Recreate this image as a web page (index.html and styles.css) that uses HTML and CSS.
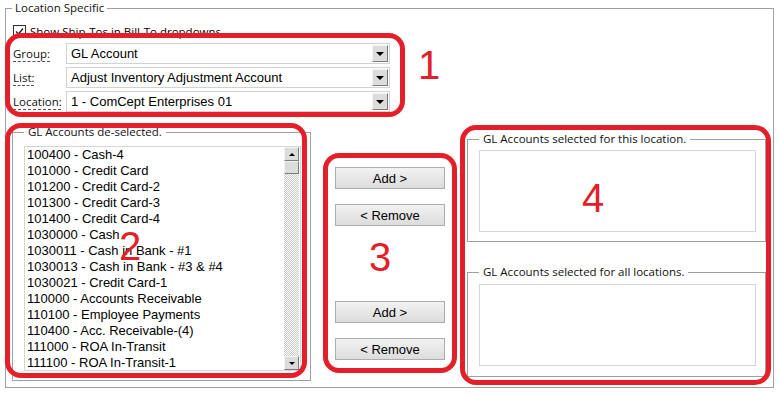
FILE: index.html
```html
<!DOCTYPE html>
<html lang="en">
<head>
  <meta charset="UTF-8" />
  <title>Location Specific</title>
  <link rel="stylesheet" href="styles.css">
</head>
<body>
  <div class="page">
    <fieldset class="group outer">
      <legend>Location Specific</legend>
      <label class="check">
        <span class="box"><svg width="11" height="11" viewBox="0 0 11 11"><polyline points="2,5.5 4.5,8 9,2.5" fill="none" stroke="#222" stroke-width="1.4"/></svg></span>
        Show Ship-Tos in Bill-To dropdowns
      </label>

      <div class="fields">
        <div class="field">
          <span class="lbl"><u>Group:</u></span>
          <div class="combo"><span>GL Account</span><span class="drop"></span></div>
        </div>
        <div class="field">
          <span class="lbl"><u>List:</u></span>
          <div class="combo"><span>Adjust Inventory Adjustment Account</span><span class="drop"></span></div>
        </div>
        <div class="field">
          <span class="lbl"><u>Location:</u></span>
          <div class="combo"><span>1 - ComCept Enterprises 01</span><span class="drop"></span></div>
        </div>
      </div>

      <div class="lists">
        <fieldset class="group deselected">
          <legend>GL Accounts de-selected.</legend>
          <div class="listbox tall">
            <ul class="items">
              <li>100400 - Cash-4</li>
              <li>101000 - Credit Card</li>
              <li>101200 - Credit Card-2</li>
              <li>101300 - Credit Card-3</li>
              <li>101400 - Credit Card-4</li>
              <li>1030000 - Cash</li>
              <li>1030011 - Cash in Bank - #1</li>
              <li>1030013 - Cash in Bank - #3 &amp; #4</li>
              <li>1030021 - Credit Card-1</li>
              <li>110000 - Accounts Receivable</li>
              <li>110100 - Employee Payments</li>
              <li>110400 - Acc. Receivable-(4)</li>
              <li>111000 - ROA In-Transit</li>
              <li>111100 - ROA In-Transit-1</li>
            </ul>
            <div class="scroll">
              <span class="sbtn up"></span>
              <span class="thumb"></span>
              <span class="track"></span>
              <span class="sbtn down"></span>
            </div>
          </div>
        </fieldset>

        <div class="actions">
          <button class="btn">Add &gt;</button>
          <button class="btn">&lt; Remove</button>
          <button class="btn second">Add &gt;</button>
          <button class="btn">&lt; Remove</button>
        </div>

        <div class="selected">
          <fieldset class="group sel">
            <legend>GL Accounts selected for this location.</legend>
            <div class="listbox short"></div>
          </fieldset>
          <fieldset class="group sel all">
            <legend>GL Accounts selected for all locations.</legend>
            <div class="listbox short"></div>
          </fieldset>
        </div>
      </div>
    </fieldset>

    <!-- annotation marks -->
    <div class="ring r1"></div>
    <div class="ring r2"></div>
    <div class="ring r3"></div>
    <div class="ring r4"></div>
    <span class="num n1">1</span>
    <span class="num n2">2</span>
    <span class="num n3">3</span>
    <span class="num n4">4</span>
  </div>
</body>
</html>
```

FILE: styles.css
```css
body {
  margin: 0;
  background: #fff;
  color: #000;
  font-family: "Liberation Sans", Arial, sans-serif;
  font-size: 13px;
}
.page {
  position: relative;
  width: 779px;
  height: 395px;
  overflow: hidden;
}
.group {
  margin: 0;
  border: 1px solid #a0a0a0;
  min-width: 0;
  box-sizing: border-box;
}
.group legend {
  font-family: "Open Sans", sans-serif;
  font-size: 11.5px;
  line-height: 16px;
  padding: 0 4px;
  color: #111;
}
.outer {
  margin-left: 5px;
  width: 769px;
  height: 388px;
  padding: 6px 7px 0 6px;
}
.outer > legend {
  padding: 0 3px;
}
.check {
  display: flex;
  align-items: center;
  gap: 4px;
  height: 18px;
  margin-left: 1px;
  font-family: "Open Sans", sans-serif;
  font-size: 11.5px;
}
.box {
  width: 11px;
  height: 11px;
  border: 1px solid #333;
  background: #fff;
  display: flex;
}
.fields {
  margin-top: 3px;
  display: flex;
  flex-direction: column;
  gap: 3px;
}
.field {
  display: flex;
  align-items: center;
  height: 21px;
  margin-left: 1px;
}
.lbl {
  width: 53px;
  font-family: "Open Sans", sans-serif;
  font-size: 11.5px;
  color: #111;
}
.lbl u {
  text-decoration: underline dashed #555;
  text-underline-offset: 3px;
}
.combo {
  width: 324px;
  height: 21px;
  box-sizing: border-box;
  border: 1px solid #d2d2d2;
  display: flex;
  align-items: center;
  padding-left: 4px;
}
.drop {
  margin-left: auto;
  margin-right: 1px;
  width: 16px;
  height: 17px;
  box-sizing: border-box;
  background: #dcdcdc;
  border: 1px solid;
  border-color: #f4f4f4 #7a7a7a #7a7a7a #f4f4f4;
  display: flex;
  align-items: center;
  justify-content: center;
}
.drop::after {
  content: "";
  border-left: 4px solid transparent;
  border-right: 4px solid transparent;
  border-top: 4px solid #000;
}
.lists {
  display: flex;
  align-items: flex-start;
  margin-top: 12px;
}
.deselected {
  width: 299px;
  height: 257px;
  padding: 6px 9px 0 11px;
}
.listbox {
  border: 1px solid #d6d6d6;
  box-sizing: border-box;
  background: #fff;
}
.tall {
  height: 225px;
  display: flex;
}
.items {
  list-style: none;
  margin: 0;
  padding: 0 0 0 2px;
  flex: 1;
  line-height: 16px;
  overflow: hidden;
}
.scroll {
  width: 15px;
  margin-right: 1px;
  display: flex;
  flex-direction: column;
}
.sbtn, .thumb {
  box-sizing: border-box;
  background: #dcdcdc;
  border: 1px solid;
  border-color: #f4f4f4 #7a7a7a #7a7a7a #f4f4f4;
  display: flex;
  align-items: center;
  justify-content: center;
}
.sbtn { height: 14px; }
.thumb { height: 13px; }
.track {
  flex: 1;
  background: repeating-conic-gradient(#c8c8c8 0 25%, #fff 0 50%) 0 0 / 2px 2px;
}
.up::after {
  content: "";
  border-left: 3px solid transparent;
  border-right: 3px solid transparent;
  border-bottom: 3px solid #000;
}
.down::after {
  content: "";
  border-left: 3px solid transparent;
  border-right: 3px solid transparent;
  border-top: 3px solid #000;
}
.actions {
  width: 110px;
  margin: 0 22px 0 24px;
  padding-top: 43px;
  display: flex;
  flex-direction: column;
}
.btn {
  height: 22px;
  padding: 0;
  border: 1px solid #adadad;
  background: linear-gradient(#f2f2f2, #dcdcdc);
  font-family: "Liberation Sans", Arial, sans-serif;
  font-size: 13px;
  color: #000;
}
.btn + .btn {
  margin-top: 15px;
}
.btn.second {
  margin-top: 75px;
}
.selected {
  width: 299px;
  margin-top: 7px;
  display: flex;
  flex-direction: column;
}
.sel {
  height: 111px;
  padding: 3px 9px 0 11px;
}
.sel.all {
  margin-top: 22px;
  height: 113px;
  padding-top: 4px;
}
.short {
  height: 82px;
}
.ring {
  position: absolute;
  box-sizing: border-box;
  border: 5px solid #e3202a;
  border-radius: 16px;
}
.r1 { left: 5px; top: 33px; width: 400px; height: 84px; }
.r2 { left: 5px; top: 123px; width: 302px; height: 255px; }
.r3 { left: 323px; top: 153px; width: 134px; height: 220px; }
.r4 { left: 460px; top: 125px; width: 311px; height: 260px; }
.num {
  position: absolute;
  font-family: "Liberation Sans", Arial, sans-serif;
  font-size: 40px;
  line-height: 40px;
  color: #e3202a;
}
.n1 { left: 418px; top: 45px; }
.n2 { left: 119px; top: 226px; }
.n3 { left: 369px; top: 237px; }
.n4 { left: 582px; top: 178px; }
```
